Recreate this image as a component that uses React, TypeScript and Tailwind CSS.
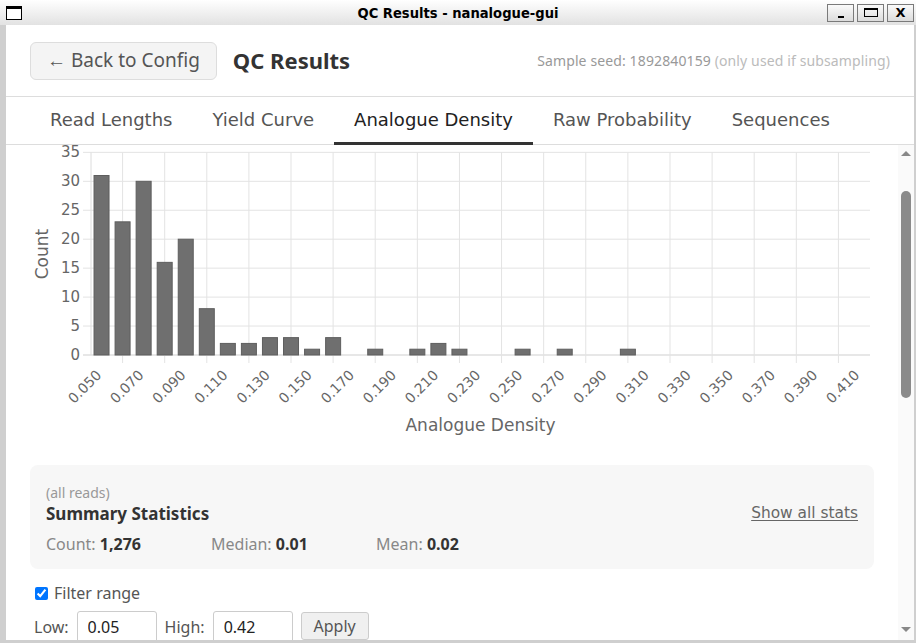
import React from 'react';

const DV = "font-['DejaVu_Sans',sans-serif]";

// histogram bins start at 0.050 and step by 0.010
const counts = [
  31, 23, 30, 16, 20, 8, 2, 2, 3, 3, 1, 3, 0, 1, 0, 1, 2, 1, 0, 0, 1, 0, 1, 0, 0, 1, 0, 0, 0, 0, 0, 0, 0, 0, 0, 0, 0,
];

const tabs = ['Read Lengths', 'Yield Curve', 'Analogue Density', 'Raw Probability', 'Sequences'];

function TitleBar() {
  return (
    <div className="h-[25px] grid grid-cols-[1fr_auto_1fr] items-center bg-gradient-to-b from-white to-[#e2e2e2]">
      <div className="ml-[6px] w-[16px] h-[14px] border border-black border-t-[3px] bg-white" />
      <div className="font-['DejaVu_Sans_Condensed','DejaVu_Sans',sans-serif] font-bold text-[14.6px] text-black">
        QC Results - nanalogue-gui
      </div>
      <div className="flex justify-end gap-[3px] mr-[2px]">
        <div className="w-[27px] h-[18px] border border-[#7a7a7a] bg-gradient-to-b from-[#fafafa] to-[#dcdcdc] flex items-end justify-center pb-[3px]">
          <div className="w-[6px] h-[2px] bg-black" />
        </div>
        <div className="w-[27px] h-[18px] border border-[#7a7a7a] bg-gradient-to-b from-[#fafafa] to-[#dcdcdc] flex items-center justify-center">
          <div className="w-[14px] h-[9px] border border-black border-t-2" />
        </div>
        <div className="w-[27px] h-[18px] border border-[#7a7a7a] bg-gradient-to-b from-[#fafafa] to-[#dcdcdc] flex items-center justify-center">
          <span className={`${DV} font-bold text-[13px] leading-none text-black`}>X</span>
        </div>
      </div>
    </div>
  );
}

function Histogram() {
  const left = 85;
  const right = 864;
  const y0 = 210;
  const perCount = 5.79;
  const cat = (right - left) / counts.length;
  const center = (i: number) => left + cat * (i + 0.5);
  const yTicks = [0, 5, 10, 15, 20, 25, 30, 35];
  const xGrid = Array.from({ length: 18 }, (_, k) => left + cat * (1.5 + 2 * k));

  return (
    <svg width={892} height={300} className="block" fontFamily="DejaVu Sans, sans-serif">
      {yTicks.map((v) => (
        <line
          key={v}
          x1={77}
          x2={right}
          y1={y0 - v * perCount}
          y2={y0 - v * perCount}
          stroke={v === 0 ? '#cfcfcf' : '#e3e3e3'}
          strokeWidth={1}
        />
      ))}
      <line x1={left} x2={left} y1={y0 - 35 * perCount} y2={y0} stroke="#dcdcdc" />
      {xGrid.map((x, k) => (
        <line key={k} x1={x} x2={x} y1={y0 - 35 * perCount} y2={y0 + 8} stroke="#e3e3e3" />
      ))}
      {counts.map((c, i) =>
        c > 0 ? (
          <rect
            key={i}
            x={center(i) - 7.5}
            y={y0 - c * perCount}
            width={15}
            height={c * perCount}
            fill="#6f6f6f"
            stroke="#5e5e5e"
            strokeWidth={1}
          />
        ) : null,
      )}
      {yTicks.map((v) => (
        <text
          key={v}
          x={74}
          y={y0 - v * perCount}
          textAnchor="end"
          dominantBaseline="middle"
          fontSize={15}
          fill="#666"
        >
          {v}
        </text>
      ))}
      {counts.map((_, i) => {
        if (i % 2 !== 0) return null;
        const x = center(i) - 2;
        return (
          <text
            key={i}
            x={x}
            y={228}
            textAnchor="end"
            dominantBaseline="middle"
            fontSize={14}
            fill="#666"
            transform={`rotate(-45 ${x} 228)`}
          >
            {(0.05 + i * 0.01).toFixed(3)}
          </text>
        );
      })}
      <text x={37} y={109} textAnchor="middle" dominantBaseline="middle" fontSize={17} fill="#666" transform="rotate(-90 37 109)">
        Count
      </text>
      <text x={(left + right) / 2} y={281} textAnchor="middle" dominantBaseline="middle" fontSize={17} fill="#666">
        Analogue Density
      </text>
    </svg>
  );
}

function SummaryStats() {
  const stats = [
    ['Count:', '1,276'],
    ['Median:', '0.01'],
    ['Mean:', '0.02'],
  ];
  return (
    <div className="mx-6 mt-5 h-[104px] rounded-lg bg-[#f7f7f7] px-4 pt-[18px]">
      <div className="flex items-end justify-between">
        <div>
          <div className="text-[14px] leading-[20px] text-[#999]">(all reads)</div>
          <div className="text-[17px] leading-[21px] font-bold text-[#333]">Summary Statistics</div>
        </div>
        <span className={`${DV} text-[15.4px] leading-[21px] text-[#666] underline underline-offset-2`}>Show all stats</span>
      </div>
      <div className="mt-[9px] flex text-[16px] leading-[22px]">
        {stats.map(([label, value]) => (
          <div key={label} className="w-[165px]">
            <span className="text-[#888]">{label} </span>
            <span className="font-bold text-[#333]">{value}</span>
          </div>
        ))}
      </div>
    </div>
  );
}

function FilterRange() {
  return (
    <div className="mx-6 text-[16px] text-[#555]">
      <label className="mt-[13px] flex items-center gap-[6px] leading-[22px]">
        <input type="checkbox" checked readOnly className="ml-[5px] w-[13px] h-[13px]" />
        Filter range
      </label>
      <div className="mt-[7px] flex items-center">
        <span className="ml-1 mr-2">Low:</span>
        <input
          readOnly
          value="0.05"
          className="w-[80px] h-[32px] border border-[#ccc] rounded-[3px] px-[10px] text-[#222] bg-white"
        />
        <span className="ml-[8px] mr-2">High:</span>
        <input
          readOnly
          value="0.42"
          className="w-[80px] h-[32px] border border-[#ccc] rounded-[3px] px-[10px] text-[#222] bg-white"
        />
        <button className="ml-[8px] w-[68px] h-[28px] border border-[#ccc] rounded-[3px] bg-[#f0f0f0] text-[#555] self-start mt-[1px] leading-[24px]">
          Apply
        </button>
      </div>
    </div>
  );
}

function ScrollTrack() {
  return (
    <div className="w-[16px] bg-[#fafafa] flex flex-col items-center">
      <div className="mt-[6px] w-0 h-0 border-x-[5px] border-x-transparent border-b-[5px] border-b-[#888]" />
      <div className="mt-[35px] w-[10px] h-[207px] rounded-full bg-[#8a8a8a]" />
      <div className="flex-1" />
      <div className="mb-[8px] w-0 h-0 border-x-[5px] border-x-transparent border-t-[5px] border-t-[#888]" />
    </div>
  );
}

export default function App() {
  return (
    <div className="w-[916px] h-[643px] flex flex-col overflow-hidden bg-[#cfcfcf] font-['Noto_Sans',sans-serif]">
      <TitleBar />
      <div className="flex-1 flex min-h-0">
        <div className="w-[6px] bg-[#cfcfcf]" />
        <div className="flex-1 flex flex-col bg-white min-w-0">
          <header className="h-[72px] border-b border-[#ddd] px-6 flex items-center">
            <button className="h-[38px] px-4 rounded-md border border-[#ddd] bg-[#f4f4f4] text-[19px] text-[#555]">
              ← Back to Config
            </button>
            <h1 className="ml-4 text-[22px] font-bold text-[#333]">QC Results</h1>
            <div className="ml-auto text-[14px] tracking-[0.12px]">
              <span className="text-[#999]">Sample seed: 1892840159</span>{' '}
              <span className="text-[#bbb]">(only used if subsampling)</span>
            </div>
          </header>
          <nav className="h-[48px] border-b border-[#ddd] px-6 flex">
            {tabs.map((t) => (
              <div
                key={t}
                className={`${DV} h-[48px] -mb-px px-5 flex items-center text-[18px] border-b-[3px] ${
                  t === 'Analogue Density' ? 'border-[#333] text-[#222]' : 'border-transparent text-[#555]'
                }`}
              >
                {t}
              </div>
            ))}
          </nav>
          <div className="flex-1 flex min-h-0">
            <div className="flex-1 overflow-hidden">
              <Histogram />
              <SummaryStats />
              <FilterRange />
            </div>
            <ScrollTrack />
          </div>
        </div>
        <div className="w-[2px] bg-[#cfcfcf]" />
      </div>
      <div className="h-[3px] bg-[#cfcfcf]" />
    </div>
  );
}
